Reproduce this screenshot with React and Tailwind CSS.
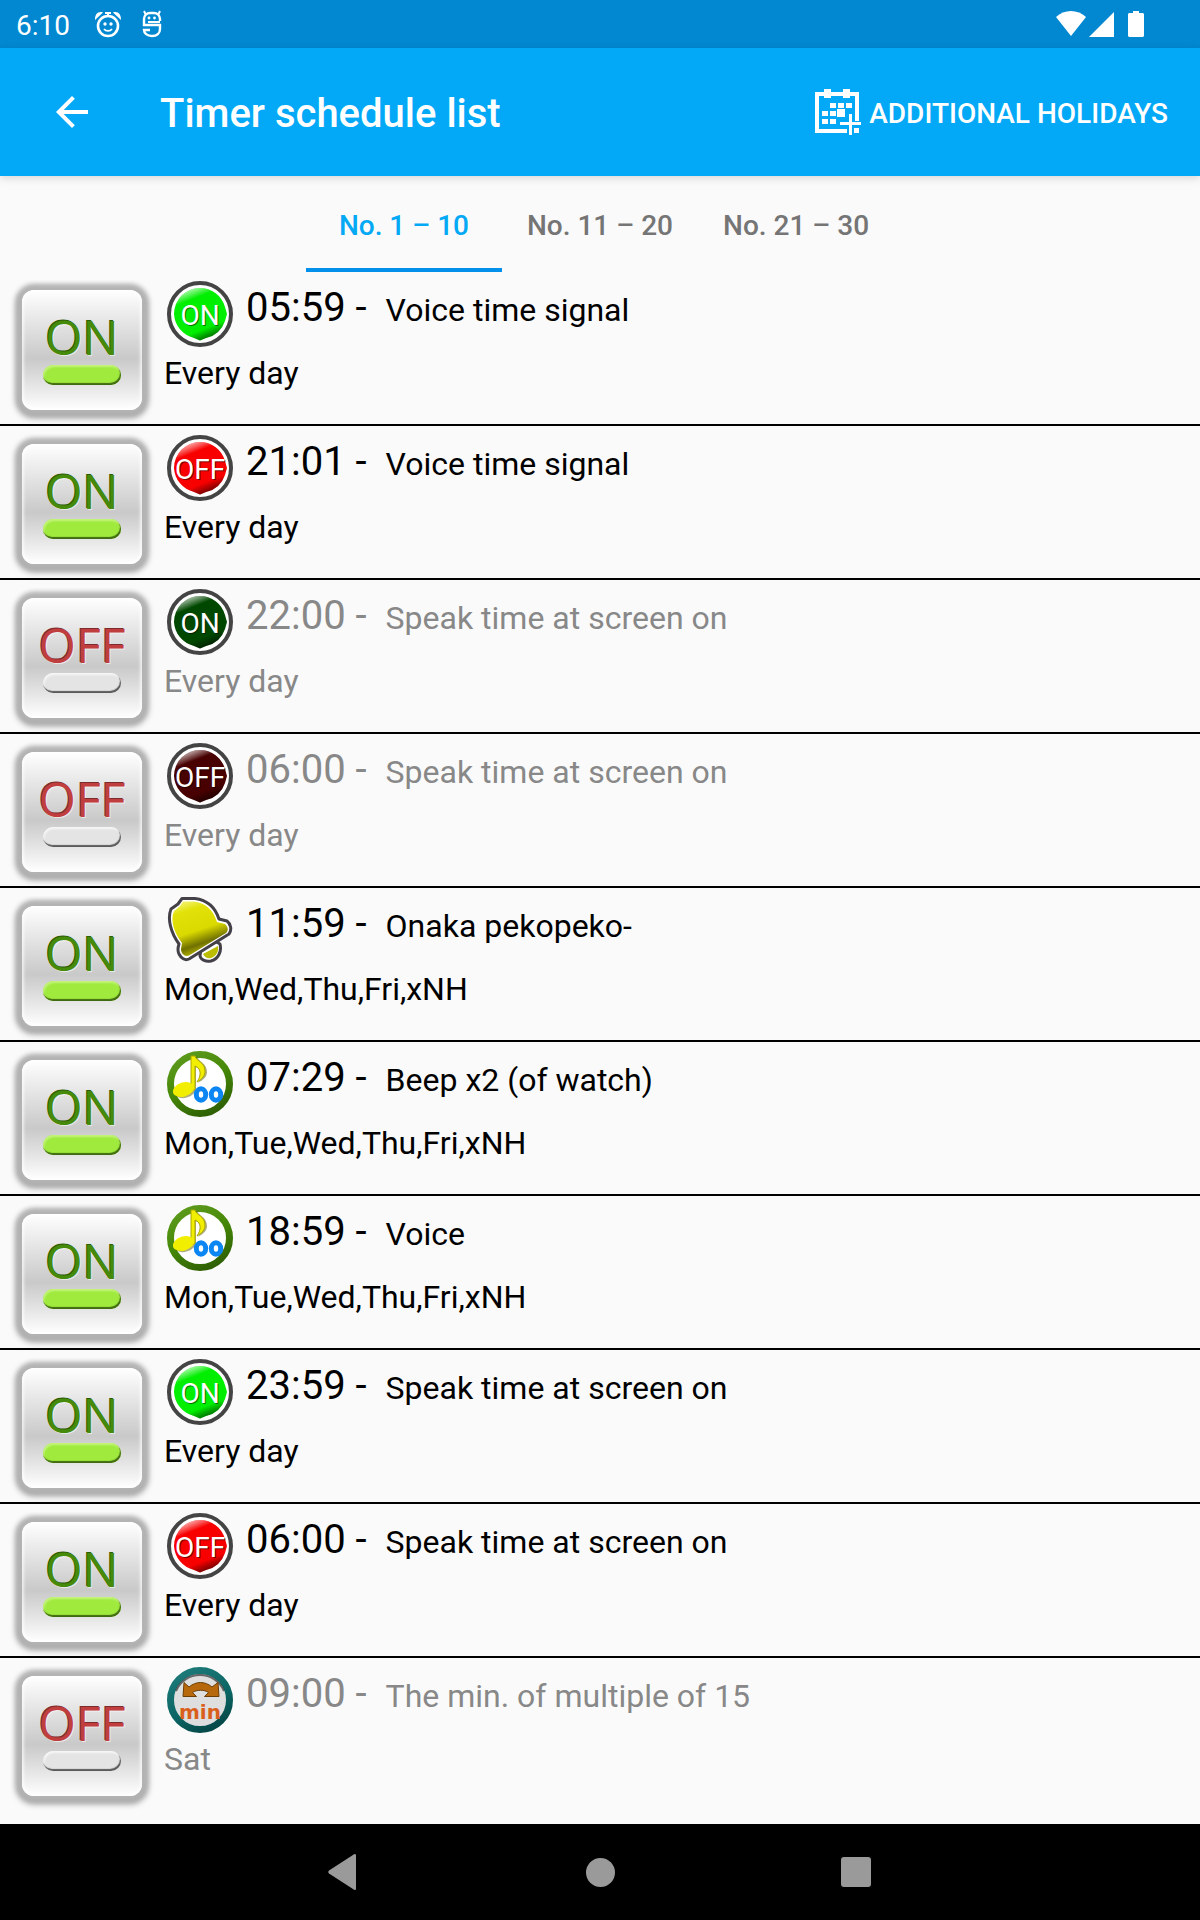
import React, { useState } from 'react';
import clsx from 'clsx';

const schedules = [
  { id: 1, enabled: true, icon: 'on', time: '05:59', label: 'Voice time signal', days: 'Every day' },
  { id: 2, enabled: true, icon: 'off', time: '21:01', label: 'Voice time signal', days: 'Every day' },
  { id: 3, enabled: false, icon: 'on', time: '22:00', label: 'Speak time at screen on', days: 'Every day' },
  { id: 4, enabled: false, icon: 'off', time: '06:00', label: 'Speak time at screen on', days: 'Every day' },
  { id: 5, enabled: true, icon: 'bell', time: '11:59', label: 'Onaka pekopeko-', days: 'Mon,Wed,Thu,Fri,xNH' },
  { id: 6, enabled: true, icon: 'music', time: '07:29', label: 'Beep x2 (of watch)', days: 'Mon,Tue,Wed,Thu,Fri,xNH' },
  { id: 7, enabled: true, icon: 'music', time: '18:59', label: 'Voice', days: 'Mon,Tue,Wed,Thu,Fri,xNH' },
  { id: 8, enabled: true, icon: 'on', time: '23:59', label: 'Speak time at screen on', days: 'Every day' },
  { id: 9, enabled: true, icon: 'off', time: '06:00', label: 'Speak time at screen on', days: 'Every day' },
  { id: 10, enabled: false, icon: 'minutes', time: '09:00', label: 'The min. of multiple of 15', days: 'Sat' },
];

const tabs = ['No. 1 – 10', 'No. 11 – 20', 'No. 21 – 30'];

// Gradients shared by all the row icons
const IconDefs = () => (
  <svg width="0" height="0" className="absolute" aria-hidden="true">
    <defs>
      <linearGradient id="gloss" x1="0.25" y1="0" x2="0.65" y2="1">
        <stop offset="0" stopColor="#fff" stopOpacity="0.8" />
        <stop offset="0.22" stopColor="#fff" stopOpacity="0" />
        <stop offset="0.78" stopColor="#000" stopOpacity="0" />
        <stop offset="1" stopColor="#000" stopOpacity="0.65" />
      </linearGradient>
      <linearGradient id="bell" x1="0.3" y1="0" x2="0.62" y2="0.95">
        <stop offset="0" stopColor="#f0f060" />
        <stop offset="0.15" stopColor="#e2e20a" />
        <stop offset="0.55" stopColor="#dada00" />
        <stop offset="0.8" stopColor="#707000" />
        <stop offset="1" stopColor="#c4c400" />
      </linearGradient>
      <linearGradient id="greenRing" x1="0.2" y1="0" x2="0.7" y2="1">
        <stop offset="0" stopColor="#5c9a1c" />
        <stop offset="0.5" stopColor="#458708" />
        <stop offset="1" stopColor="#2f6104" />
      </linearGradient>
      <linearGradient id="tealRing" x1="0.2" y1="0" x2="0.7" y2="1">
        <stop offset="0" stopColor="#1c7a78" />
        <stop offset="0.6" stopColor="#0b6464" />
        <stop offset="1" stopColor="#064848" />
      </linearGradient>
    </defs>
  </svg>
);

// Disc with slight points on the right and at the bottom
const POWER_DISC = 'M33 7A26 26 0 0 1 58 26L60 33L58 40A26 26 0 0 1 39 57L33 59.500L27 57A26 26 0 0 1 7 33A26 26 0 0 1 33 7z';

const PowerIcon = ({ text, color }) => (
  <svg width="66" height="66" viewBox="0 0 66 66" aria-hidden="true">
    <circle cx="33" cy="33" r="31" fill="#fff" stroke="#444" strokeWidth="4" />
    <path d={POWER_DISC} fill={color} />
    <path d={POWER_DISC} fill="url(#gloss)" />
    <text x="34" y="45" textAnchor="middle" fontFamily="Roboto, sans-serif" fontSize="28" fill="#000" opacity="0.5">{text}</text>
    <text x="33" y="44" textAnchor="middle" fontFamily="Roboto, sans-serif" fontSize="28" fill="#fff">{text}</text>
  </svg>
);

const BellIcon = () => (
  <svg width="66" height="66" viewBox="0 0 66 66" strokeLinejoin="round" aria-hidden="true">
    <path d="M33 59c1 4 6 6 11 5 7-2 11-9 9-17l-5-3-14 8z" fill="#fff" stroke="#444048" strokeWidth="3" />
    <path d="M36 57c2 4 5 5 8 4 5-2 8-6 7-12z" fill="#bcbc00" />
    <path
      d="M15 1.500 28 1.500C40 3 48 10 52 22L60 24C64 27 65 33 62 37L22 62C18 64 14 61 12 57C10 53 11 50 12 47C4 36 0 22 4 12L11 7z"
      fill="#fff"
      stroke="#444048"
      strokeWidth="3"
    />
    <path
      d="M16 4.500 27 4.500C38 6 46 12 50 25L58 27C61 30 62 33 59 36L22 58.500C18 60 14 57 14 52L15 46C7 36 3 23 7 14L13 9z"
      fill="url(#bell)"
    />
  </svg>
);

const MusicIcon = () => (
  <svg width="66" height="66" viewBox="0 0 66 66" aria-hidden="true">
    <circle cx="33" cy="33" r="29.500" fill="#fff" stroke="url(#greenRing)" strokeWidth="7" />
    <g fill="#606000" opacity="0.5">
      <ellipse cx="18" cy="40" rx="11" ry="7" transform="rotate(-18 17 39)" />
      <path d="M25 6h5c1 4 10 6 10 15 0 5-4 8-9 11 4-6 5-12-2-16v25h-4z" />
    </g>
    <path d="M24 5h4c1 5 10 6 10 15 0 5-3 8-8 11 4-6 5-13-2-16v24h-4z" fill="#f2ee00" stroke="#aaa600" strokeWidth="1" />
    <ellipse cx="16.500" cy="38.500" rx="11" ry="7" transform="rotate(-18 16.500 38.500)" fill="#f2ee00" />
    <g fill="none" stroke="#0c86f2" strokeWidth="5">
      <ellipse cx="34" cy="43.500" rx="4.700" ry="5.700" />
      <ellipse cx="49" cy="43.500" rx="4.700" ry="5.700" />
    </g>
  </svg>
);

const MinutesIcon = () => (
  <svg width="66" height="66" viewBox="0 0 66 66" aria-hidden="true">
    <circle cx="33" cy="33" r="29.500" fill="#dedede" stroke="url(#tealRing)" strokeWidth="7" />
    <path d="M9 24a26 26 0 0 1 48 0" fill="none" stroke="#333" strokeWidth="2" opacity="0.7" />
    <path
      d="M17 15.500l5 4.500c7-6 16-6 23 0l6-4.500 1 14H37.500l4-4c-4-3-12-3-16 0l4 4H16z"
      fill="#b8680c"
      stroke="#6c3e06"
      strokeWidth="1"
    />
    <text x="33" y="52" textAnchor="middle" fontFamily="DejaVu Sans, sans-serif" fontWeight="700" fontSize="20" fill="#d9601c">min</text>
  </svg>
);

const ScheduleIcon = ({ icon, enabled }) => {
  if (icon === 'on') return <PowerIcon text="ON" color={enabled ? '#00ee00' : '#004800'} />;
  if (icon === 'off') return <PowerIcon text="OFF" color={enabled ? '#f80000' : '#480000'} />;
  if (icon === 'bell') return <BellIcon />;
  if (icon === 'music') return <MusicIcon />;
  return <MinutesIcon />;
};

const ToggleButton = ({ enabled, onClick, label }) => (
  <button
    onClick={onClick}
    aria-pressed={enabled}
    title={label}
    className="flex size-[120px] shrink-0 flex-col items-center rounded-xl bg-linear-to-b from-white via-[#c9c9c9] via-57% to-white pt-5 shadow-[0_0_5px_5px_#b4b4b4,0_2px_6px_6px_#a0a0a0,inset_0_0_3px_2px_#ffffffb0]"
  >
    <span
      className={clsx(
        "font-['Open_Sans',sans-serif] text-5xl leading-[54px]",
        enabled
          ? 'text-[#458a0a] [text-shadow:-1px_-1px_0_#2c5c04,1px_1px_0_#ffffff90]'
          : 'text-[#c03e3e] [text-shadow:-1px_-1px_0_#7c2c2c,1px_1px_0_#ffffff90]'
      )}
    >
      {enabled ? 'ON' : 'OFF'}
    </span>
    <span
      className={clsx(
        'mt-px h-5 w-[78px] rounded-full',
        enabled
          ? 'bg-[#a0ea3e] shadow-[inset_-1px_-2px_1px_#3f6a10,inset_1px_2px_2px_#c4f47c]'
          : 'bg-[#e4e4e4] shadow-[inset_-1px_-2px_1px_#5a5a5a,inset_1px_2px_2px_#f6f6f6]'
      )}
    />
  </button>
);

const StatusBar = () => (
  <div className="flex h-12 items-center justify-between bg-[#0288d1] pl-4 pr-14 text-white">
    <div className="flex items-center">
      <span className="pt-1 text-[28px] leading-8">6:10</span>
      {/* Alarm clock */}
      <svg width="28" height="28" viewBox="0 0 28 28" className="ml-6" aria-hidden="true">
        <circle cx="14" cy="16" r="10" fill="none" stroke="#fff" strokeWidth="2.600" />
        <path d="M1 10c0-6 3-9 8-7.500zM27 10c0-6-3-9-8-7.500zM11 2h6v2h-2v3h-2V4h-2z" fill="#fff" />
        <circle cx="11" cy="14" r="1.700" fill="#fff" />
        <circle cx="17" cy="14" r="1.700" fill="#fff" />
        <path d="M10 19c2 2.500 6 2.500 8 0" fill="none" stroke="#fff" strokeWidth="1.800" />
      </svg>
      <svg width="20" height="28" viewBox="0 0 20 28" className="ml-5" aria-hidden="true">
        <path d="M18 11V9a6 6 0 0 0-6-6H8a6 6 0 0 0-6 6v6h16v4c0 4-3 7-8 7s-8-3-8-6h6" fill="none" stroke="#fff" strokeWidth="2.400" />
        <path d="M4 5 2 1M16 5l2-4M6 12h12" stroke="#fff" strokeWidth="2" />
        <circle cx="7" cy="8" r="1.400" fill="#fff" />
        <circle cx="12.500" cy="8" r="1.400" fill="#fff" />
      </svg>
    </div>
    <div className="flex items-center">
      <svg width="30" height="26" viewBox="0 0 30 26" fill="#fff" aria-hidden="true">
        <path d="M0 6C8-2 22-2 30 6L15 25z" />
      </svg>
      <svg width="25" height="26" viewBox="0 0 25 26" fill="#fff" className="ml-[3px]" aria-hidden="true">
        <path d="M25 1v25H0z" />
      </svg>
      <svg width="16" height="26" viewBox="0 0 16 26" fill="#fff" className="ml-3.5" aria-hidden="true">
        <path d="M5 0h6v2h4l1 1v22l-1 1H1l-1-1V3l1-1h4z" />
      </svg>
    </div>
  </div>
);

const App = () => {
  const [items, setItems] = useState(schedules);
  const [activeTab, setActiveTab] = useState(0);

  const toggle = (id) => {
    setItems(items.map((s) => (s.id === id ? { ...s, enabled: !s.enabled } : s)));
  };

  return (
    <div className="flex min-h-screen flex-col bg-[#fafafa] font-['Roboto',sans-serif] text-black">
      <IconDefs />
      <StatusBar />

      {/* App bar */}
      <header className="flex h-32 items-center bg-[#03a9f7] pl-12 pr-8 text-white shadow-[0_2px_8px_#00000024]">
        <button title="Back">
          <svg width="48" height="48" viewBox="0 0 24 24" fill="#fff" aria-hidden="true">
            <path d="M20 11H7.830l5.590-5.590L12 4l-8 8 8 8 1.410-1.410L7.830 13H20v-2z" />
          </svg>
        </button>
        <h1 className="ml-16 flex-1 pt-1 text-[40px] leading-12 font-medium">Timer schedule list</h1>
        <button className="flex items-center gap-2 text-[28px] leading-8 font-medium">
          <svg width="46" height="46" viewBox="0 0 46 46" fill="#fff" aria-hidden="true">
            <path d="M0 3h9V0h7v3h12V0h7v3h9v29h-4V7h-5v2h-7V7H16v2H9V7H4v33h28v4H0z" />
            <path d="M15 14h6v5h-6zM23 14h6v5h-6zM31 14h6v5h-6zM7 22h6v5H7zM15 22h6v5h-6zM22 20h8v8h-8zM7 30h6v5H7zM15 30h6v5h-6z" />
            <path d="M34 25h3v8h9v3h-9v10h-3V36h-9v-3h9zM39 39h5v5h-5z" />
          </svg>
          <span className="pt-1">ADDITIONAL HOLIDAYS</span>
        </button>
      </header>

      {/* Tabs */}
      <nav role="tablist" className="mx-auto grid h-24 w-max grid-cols-3">
        {tabs.map((tab, i) => (
          <button
            key={tab}
            role="tab"
            aria-selected={i === activeTab}
            onClick={() => setActiveTab(i)}
            className={clsx(
              'border-b-4 px-[25px] pt-2 text-[28px] leading-8 font-medium',
              i === activeTab ? 'border-[#0290ea] text-[#03a9f4]' : 'border-transparent text-[#757575]'
            )}
          >
            {tab}
          </button>
        ))}
      </nav>

      {/* Schedule rows */}
      <ul className="flex-1 divide-y-2 divide-black pb-3.5">
        {items.map((s) => (
          <li key={s.id} className="flex gap-[22px] pl-[22px]">
            <div className="pt-[18px] pb-3.5">
              <ToggleButton enabled={s.enabled} onClick={() => toggle(s.id)} label={`Schedule No. ${s.id}`} />
            </div>
            <div className={clsx('pt-[9px]', s.enabled ? 'text-black' : 'text-[#888888]')}>
              <div className="flex gap-[13px] pl-[3px]">
                <ScheduleIcon icon={s.icon} enabled={s.enabled} />
                <p className="flex items-baseline gap-[19px] leading-[54px]">
                  <span className="text-[40px]">{s.time} -</span>
                  <span className="text-[32px]">{s.label}</span>
                </p>
              </div>
              <p className="mt-1.5 text-[32px] leading-10">{s.days}</p>
            </div>
          </li>
        ))}
      </ul>

      {/* System navigation */}
      <footer className="flex h-24 items-center justify-center bg-black">
        <button title="Back" className="flex w-64 justify-center">
          <svg width="32" height="36" viewBox="0 0 32 36" fill="#9a9a9a" aria-hidden="true">
            <path d="M26.500 0c1 0 1.500.5 1.500 1.500v33c0 1-.5 1.500-1.500 1.500L1 19.500c-1-1-1-2 0-3z" />
          </svg>
        </button>
        <button title="Home" className="flex w-64 justify-center">
          <span className="size-[29px] rounded-full bg-[#9a9a9a]" />
        </button>
        <button title="Overview" className="flex w-64 justify-center">
          <span className="size-[30px] rounded-[3px] bg-[#9a9a9a]" />
        </button>
      </footer>
    </div>
  );
};

export default App;
